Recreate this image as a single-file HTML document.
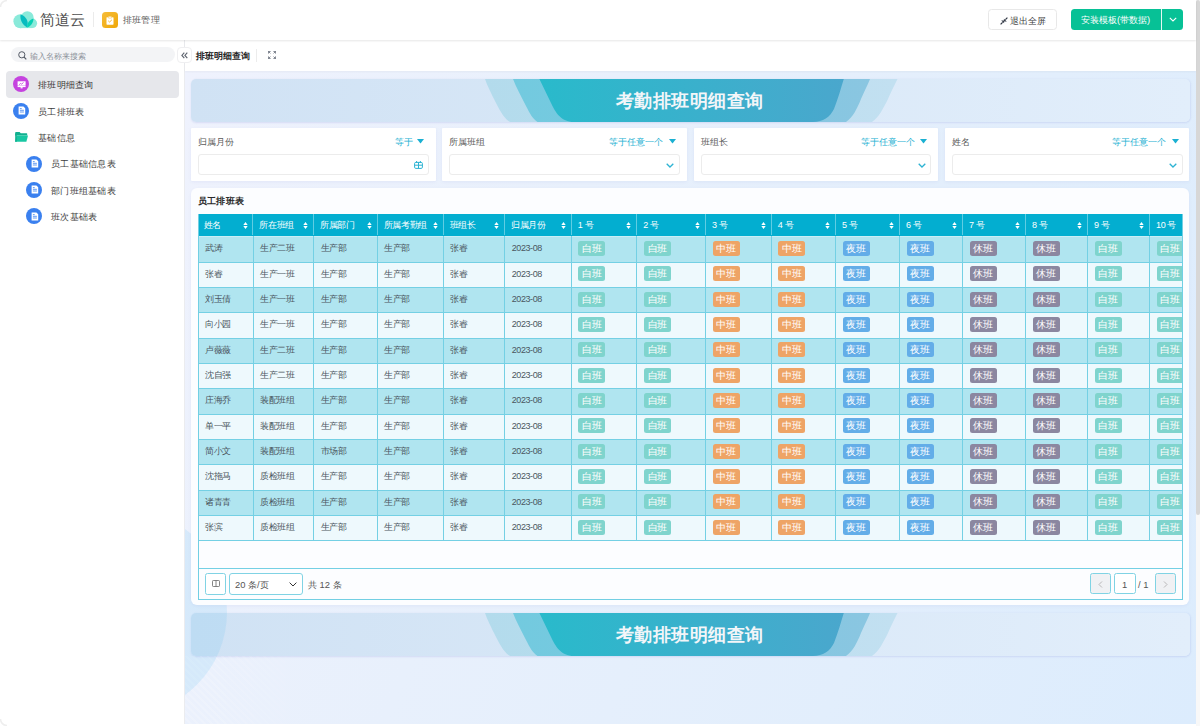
<!DOCTYPE html>
<html><head><meta charset="utf-8">
<style>
*{box-sizing:border-box;margin:0;padding:0}
html,body{width:1200px;height:726px;overflow:hidden;background:#fff;font-family:"Liberation Sans",sans-serif;color:#333}
.a{position:absolute}
#hdr{left:0;top:0;width:1196px;height:40px;background:#fff;box-shadow:0 1px 2px rgba(0,0,0,.10);z-index:5}
#side{left:0;top:40px;width:185px;height:686px;background:#fff;border-right:1px solid #ebecef}
#chead{left:185px;top:40px;width:1011px;height:31px;background:#fff;z-index:3;box-shadow:0 1px 2px rgba(0,0,0,.04)}
#dash{left:185px;top:71px;width:1011px;height:653px;background:linear-gradient(110deg,#eff2fd 0%,#e8f0fc 35%,#e2eefc 70%,#dcecfd 100%);overflow:hidden}
.scroll{left:1196px;top:0;width:4px;height:726px;background:#f8f8f8}
.thumb{left:1196px;top:0;width:4px;height:515px;background:#d7d7d7;border-radius:2px}
.txt{white-space:nowrap;line-height:1}
.menu .it{position:absolute;left:0;width:185px;height:26px}
.ico{position:absolute;width:16px;height:16px;border-radius:50%}
.card{position:absolute;background:#fff;border-radius:1px;box-shadow:0 1px 3px rgba(130,140,210,.10)}
.flabel{position:absolute;left:7px;top:9px;font-size:9.4px;color:#595959;white-space:nowrap;line-height:1}
.fop{position:absolute;top:9px;font-size:9.4px;color:#1ab0d2;white-space:nowrap;line-height:1}
.finp{position:absolute;left:7px;top:26.3px;width:230.5px;height:21px;border:1px solid #ececec;border-radius:3px;background:#fff}
.tbl{position:absolute;left:198px;top:213.8px;width:984.5px;height:386.2px;overflow:hidden;border:1px solid #72cfe3;border-top:none}
.thead{position:absolute;left:0;top:0;width:1100px;height:22.4px;background:#03aed0}
.hc{position:absolute;top:0;height:21.6px;border-left:1px solid #5fcde3}
.hc:first-child{border-left:none}
.hc span{position:absolute;left:6.1px;top:7.5px;font-size:9px;letter-spacing:-0.35px;color:#fff;white-space:nowrap;line-height:1}
.hc .si{position:absolute;right:4.6px;top:8px}
.tbody{position:absolute;left:0;top:0;width:1100px;height:380px}
.row{position:absolute;left:0;width:1100px;height:25.35px;border-top:1px solid #74d0e4}
.rd{background:#b0e5f0}
.r0{border-top-color:#c9eef6}
.rl{background:#eef9fd}
.c{position:absolute;top:0;height:24.35px;font-size:9px;letter-spacing:-0.4px;color:#4b5660;line-height:23px;padding-left:7px;white-space:nowrap}
.vl{position:absolute;top:22px;width:1px;height:305px;background:#74d0e4}
.bd{display:inline-block;font-style:normal;width:27px;height:15px;line-height:15px;border-radius:2.5px;color:#fff;font-size:9.6px;text-align:center;vertical-align:middle;margin-top:-1px}
.bw{background:#7fd4cd}
.bz{background:#eea466}
.by{background:#63ade8}
.bx{background:#8b87a0}
</style></head><body>
<svg class="a" style="left:0;top:0;z-index:9" width="8" height="8"><path d="M0.5 7 A6.5 6.5 0 0 1 7 0.5" stroke="#eeeeee" stroke-width="1.5" fill="none"/></svg><svg class="a" style="left:0;top:718px;z-index:9" width="8" height="8"><path d="M0.5 1 A6.5 6.5 0 0 0 7 7.5" stroke="#eeeeee" stroke-width="1.5" fill="none"/></svg>
<div class="a scroll"></div><div class="a thumb"></div>

<!-- header -->
<div id="hdr" class="a">
  <svg class="a" style="left:13px;top:10px" width="25" height="19" viewBox="0 0 25 19">
    <g fill="#8aeada"><circle cx="7.4" cy="11.3" r="7"/><circle cx="14.3" cy="7.5" r="6.3"/><circle cx="19.3" cy="13.3" r="4.8"/><rect x="7.4" y="10" width="12" height="8.1"/></g>
    <path d="M14.1 17.6 C9.2 14.2 6.6 9.6 7.6 4.4 C11.8 5.6 14.6 9.4 14.7 13 C14.7 14.8 14.5 16.3 14.1 17.6Z" fill="#06bcbf"/>
    <path d="M14.1 17.6 C14 13.6 16.4 9.4 20.6 8.6 C20.3 12.8 17.8 16.6 14.1 17.6Z" fill="#05d2b4"/>
  </svg>
  <div class="a txt" style="left:40px;top:11.5px;font-size:15.2px;color:#4f4f4f;letter-spacing:0.2px">简道云</div>
  <div class="a" style="left:93px;top:12px;width:1px;height:15px;background:#ebebeb"></div>
  <div class="a" style="left:102px;top:12px;width:16px;height:15.5px;border-radius:3.5px;background:linear-gradient(135deg,#f6bd3a,#efa707)"></div>
  <svg class="a" style="left:106px;top:15.5px" width="8" height="9" viewBox="0 0 8 9"><rect x="0.5" y="1.2" width="7" height="7.5" rx="0.6" fill="#fff"/><rect x="2.3" y="0.3" width="3.4" height="1.8" rx="0.4" fill="#fff" stroke="#f3b020" stroke-width="0.5"/><path d="M2.2 4.8 L3.6 6 L5.9 3.8" stroke="#f3b020" stroke-width="0.9" fill="none"/></svg>
  <div class="a txt" style="left:123px;top:16px;font-size:9.3px;color:#595959;letter-spacing:0.2px">排班管理</div>

  <div class="a" style="left:987.6px;top:9.3px;width:69.8px;height:21px;border:1px solid #e8e8e8;border-radius:3.5px;background:#fff"></div>
  <svg class="a" style="left:999.5px;top:16.5px" width="8" height="8" viewBox="0 0 8 8"><path d="M0.6 7.4 L2.6 5.4 M7.4 0.6 L5.4 2.6" stroke="#2c3340" stroke-width="1.2"/><path d="M1.2 3.4 H4.1 V6.3Z M3.9 1.7 V4.6 H6.8Z" fill="#2c3340"/></svg>
  <div class="a txt" style="left:1010px;top:15.5px;font-size:9.4px;color:#3b3b3b">退出全屏</div>

  <div class="a" style="left:1071px;top:9px;width:112px;height:21px;border-radius:3.5px;background:#07c196"></div>
  <div class="a" style="left:1161px;top:9px;width:1px;height:21px;background:#e6f8f3"></div>
  <div class="a txt" style="left:1081px;top:15px;font-size:9.4px;color:#fff">安装模板(带数据)</div>
  <svg class="a" style="left:1168.5px;top:17px" width="8" height="5" viewBox="0 0 8 5"><path d="M0.8 0.8 L4 4 L7.2 0.8" stroke="#fff" stroke-width="1.1" fill="none"/></svg>
</div>

<!-- sidebar -->
<div id="side" class="a">
  <div class="a" style="left:11px;top:7.2px;width:164px;height:15px;border-radius:7.5px;background:#f3f4f6"></div>
  <svg class="a" style="left:18px;top:11px" width="9" height="9" viewBox="0 0 9 9"><circle cx="3.8" cy="3.8" r="3.1" stroke="#555b66" stroke-width="1" fill="none"/><path d="M6 6 L8.3 8.3" stroke="#555b66" stroke-width="1.1"/></svg>
  <div class="a txt" style="left:30px;top:13px;font-size:7.8px;color:#8a9098">输入名称来搜索</div>

  <div class="a" style="left:5.5px;top:31.3px;width:173px;height:26.5px;border-radius:4px;background:#e6e7eb"></div>
  <div class="ico" style="left:13px;top:36px;background:#c543df"></div>
  <svg class="a" style="left:16.5px;top:40.5px" width="9" height="8" viewBox="0 0 9 8"><rect x="0.6" y="0.3" width="8" height="4.4" fill="#fff"/><rect x="0.6" y="5" width="8" height="1.1" fill="#fff"/><rect x="3.6" y="6.1" width="2" height="1.3" fill="#fff"/><path d="M2.2 3.6 L3.6 2.5 L4.6 3.1 L6.5 1.5" stroke="#c543df" stroke-width="0.9" fill="none"/></svg>
  <div class="a txt" style="left:38px;top:40.3px;font-size:9.4px;color:#333;letter-spacing:0.27px">排班明细查询</div>

  <div class="ico" style="left:13px;top:62.8px;background:#3a80ef"></div>
  <svg class="a" style="left:17.5px;top:66.2px" width="8" height="9" viewBox="0 0 8 9"><path d="M0.6 0.4 H5.4 L7.2 2.2 V8.4 H0.6Z" fill="#fff"/><path d="M1.9 2.6 H3.7 M1.9 4.3 H5.9 M1.9 6 H5.9" stroke="#3a80ef" stroke-width="0.8"/></svg>
  <div class="a txt" style="left:38px;top:66.5px;font-size:9.4px;color:#3c3c3c;letter-spacing:0.25px">员工排班表</div>

  <svg class="a" style="left:14.5px;top:92px" width="13" height="10" viewBox="0 0 13 10"><path d="M0.2 0.8 Q0.2 0 1 0 H4.6 L5.8 1.2 H11.6 Q12.2 1.2 12.2 1.8 V3.5 H0.2Z" fill="#11b08f"/><path d="M0 9.8 L1.6 3.4 H13 L11.4 9.8Z" fill="#18c7a3"/><path d="M0.2 1 V9.8 H1.8 V3" fill="#11b08f"/></svg>
  <div class="a txt" style="left:38px;top:92.5px;font-size:9.4px;color:#3c3c3c;letter-spacing:0.25px">基础信息</div>

  <div class="ico" style="left:26px;top:115.5px;background:#3a80ef"></div>
  <svg class="a" style="left:30.5px;top:119px" width="8" height="9" viewBox="0 0 8 9"><path d="M0.6 0.4 H5.4 L7.2 2.2 V8.4 H0.6Z" fill="#fff"/><path d="M1.9 2.6 H3.7 M1.9 4.3 H5.9 M1.9 6 H5.9" stroke="#3a80ef" stroke-width="0.8"/></svg>
  <div class="a txt" style="left:51px;top:119px;font-size:9.4px;color:#3c3c3c;letter-spacing:0.25px">员工基础信息表</div>

  <div class="ico" style="left:26px;top:141.5px;background:#3a80ef"></div>
  <svg class="a" style="left:30.5px;top:145px" width="8" height="9" viewBox="0 0 8 9"><path d="M0.6 0.4 H5.4 L7.2 2.2 V8.4 H0.6Z" fill="#fff"/><path d="M1.9 2.6 H3.7 M1.9 4.3 H5.9 M1.9 6 H5.9" stroke="#3a80ef" stroke-width="0.8"/></svg>
  <div class="a txt" style="left:51px;top:145.5px;font-size:9.4px;color:#3c3c3c;letter-spacing:0.25px">部门班组基础表</div>

  <div class="ico" style="left:26px;top:168.3px;background:#3a80ef"></div>
  <svg class="a" style="left:30.5px;top:171.7px" width="8" height="9" viewBox="0 0 8 9"><path d="M0.6 0.4 H5.4 L7.2 2.2 V8.4 H0.6Z" fill="#fff"/><path d="M1.9 2.6 H3.7 M1.9 4.3 H5.9 M1.9 6 H5.9" stroke="#3a80ef" stroke-width="0.8"/></svg>
  <div class="a txt" style="left:51px;top:172px;font-size:9.4px;color:#3c3c3c;letter-spacing:0.25px">班次基础表</div>
</div>

<!-- content header -->
<div id="chead" class="a">
  <div class="a txt" style="left:11px;top:11.5px;font-size:9.1px;font-weight:bold;color:#222">排班明细查询</div>
  <div class="a" style="left:71px;top:9px;width:1px;height:13px;background:#ececec"></div>
  <svg class="a" style="left:83px;top:11px" width="8" height="8" viewBox="0 0 8 8" fill="none" stroke="#5b6270" stroke-width="0.8"><path d="M0.4 2.6 V0.4 H2.6 M5.4 0.4 H7.6 V2.6 M7.6 5.4 V7.6 H5.4 M2.6 7.6 H0.4 V5.4"/><path d="M0.6 0.6 L2.4 2.4 M7.4 0.6 L5.6 2.4 M7.4 7.4 L5.6 5.6 M0.6 7.4 L2.4 5.6"/></svg>
</div>
<div class="a" style="left:176.5px;top:47.3px;width:15px;height:15.5px;border:1px solid #efeff1;border-radius:4px;background:#fff;z-index:6"></div>
<svg class="a" style="left:180.8px;top:51.8px;z-index:7" width="7" height="7" viewBox="0 0 7 7" fill="none" stroke="#5f6570" stroke-width="1.15"><path d="M3.3 0.6 L0.9 3.4 L3.3 6.2 M6.3 0.6 L3.9 3.4 L6.3 6.2"/></svg>

<!-- dashboard -->
<div id="dash" class="a">
  
</div>

<!-- banner 1 -->
<div class="a" style="left:191px;top:78.5px;width:999px;height:43px;border-radius:5px;box-shadow:0 1px 2px rgba(120,130,210,.16),1px 0 2px rgba(120,130,210,.10)"></div>
<svg class="a" style="left:191px;top:78.5px" width="999" height="43" viewBox="0 0 999 43">
  <defs>
    <linearGradient id="bg1" x1="0" x2="1"><stop offset="0" stop-color="#d0e2f4"/><stop offset="1" stop-color="#e2eefb"/></linearGradient>
    <linearGradient id="mg1" x1="0" x2="1"><stop offset="0" stop-color="#29bacb"/><stop offset="1" stop-color="#4aa7cd"/></linearGradient>
    <linearGradient id="la1" x1="0" x2="1"><stop offset="0" stop-color="#b3dbec"/><stop offset="1" stop-color="#c2e0f1"/></linearGradient>
    <linearGradient id="lb1" x1="0" x2="1"><stop offset="0" stop-color="#72cadf"/><stop offset="1" stop-color="#8ac6e1"/></linearGradient>
    <clipPath id="cp1"><rect width="999" height="43" rx="5"/></clipPath>
  </defs>
  <g clip-path="url(#cp1)">
  <rect width="999" height="43" fill="url(#bg1)"/>
  <path d="M294 0 C296 6 300 14 305 24 C310 34 314 40 319 43 H681 C688 38 692 30 697 20 C701 11 704 5 706.5 0Z" fill="url(#la1)"/>
  <path d="M322 0 C325 8 330 17 335 27 C339 35 342 40 346.5 43 H655 C662 38 666 30 670 20 C674 11 677 5 679 0Z" fill="url(#lb1)"/>
  <path d="M348.4 0 L360 24 C364.5 33.5 370 43 383 43 H622 C632 43 639 38 643 30 C647 20 650 9 652.8 0Z" fill="url(#mg1)"/>
  </g>
</svg>
<div class="a txt" style="left:616px;top:91.7px;font-size:18.4px;font-weight:bold;color:#f3f6f9;letter-spacing:0.45px">考勤排班明细查询</div>

<!-- filter cards -->
<div class="card" style="left:191px;top:128px;width:244.5px;height:52.5px">
  <div class="flabel">归属月份</div>
  <div class="fop" style="left:204px">等于</div>
  <svg class="a" style="left:226px;top:11px" width="7" height="5" viewBox="0 0 7 5"><path d="M0 0 H7 L3.5 4.5Z" fill="#1ab0d2"/></svg>
  <div class="finp"></div>
  <svg class="a" style="left:223px;top:33px" width="9" height="8" viewBox="0 0 9 8" fill="none" stroke="#2db3d3" stroke-width="1"><rect x="0.6" y="1.4" width="7.8" height="6" rx="1.2"/><path d="M0.6 4.2 H8.4 M4.5 1.4 V7.4 M2.6 0 V2 M6.4 0 V2"/></svg>
</div>
<div class="card" style="left:442px;top:128px;width:245px;height:52.5px">
  <div class="flabel">所属班组</div>
  <div class="fop" style="left:167px">等于任意一个</div>
  <svg class="a" style="left:226.5px;top:11px" width="7" height="5" viewBox="0 0 7 5"><path d="M0 0 H7 L3.5 4.5Z" fill="#1ab0d2"/></svg>
  <div class="finp"></div>
  <svg class="a" style="left:224px;top:35px" width="8" height="5" viewBox="0 0 8 5"><path d="M0.7 0.7 L4 4 L7.3 0.7" stroke="#2db3d3" stroke-width="1.3" fill="none"/></svg>
</div>
<div class="card" style="left:693.5px;top:128px;width:244.5px;height:52.5px">
  <div class="flabel">班组长</div>
  <div class="fop" style="left:167px">等于任意一个</div>
  <svg class="a" style="left:226.5px;top:11px" width="7" height="5" viewBox="0 0 7 5"><path d="M0 0 H7 L3.5 4.5Z" fill="#1ab0d2"/></svg>
  <div class="finp"></div>
  <svg class="a" style="left:224px;top:35px" width="8" height="5" viewBox="0 0 8 5"><path d="M0.7 0.7 L4 4 L7.3 0.7" stroke="#2db3d3" stroke-width="1.3" fill="none"/></svg>
</div>
<div class="card" style="left:945px;top:128px;width:244px;height:52.5px">
  <div class="flabel">姓名</div>
  <div class="fop" style="left:167px">等于任意一个</div>
  <svg class="a" style="left:226.5px;top:11px" width="7" height="5" viewBox="0 0 7 5"><path d="M0 0 H7 L3.5 4.5Z" fill="#1ab0d2"/></svg>
  <div class="finp"></div>
  <svg class="a" style="left:224px;top:35px" width="8" height="5" viewBox="0 0 8 5"><path d="M0.7 0.7 L4 4 L7.3 0.7" stroke="#2db3d3" stroke-width="1.3" fill="none"/></svg>
</div>

<!-- banner 2 -->
<div class="a" style="left:191px;top:613px;width:999px;height:43px;border-radius:5px;box-shadow:0 1px 2px rgba(120,130,210,.16),1px 0 2px rgba(120,130,210,.10)"></div>
<svg class="a" style="left:191px;top:613px" width="999" height="43" viewBox="0 0 999 43">
  <defs>
    <clipPath id="cp2"><rect width="999" height="43" rx="5"/></clipPath>
  </defs>
  <g clip-path="url(#cp2)">
  <rect width="999" height="43" fill="url(#bg1)"/>
  <path d="M294 0 C296 6 300 14 305 24 C310 34 314 40 319 43 H681 C688 38 692 30 697 20 C701 11 704 5 706.5 0Z" fill="url(#la1)"/>
  <path d="M322 0 C325 8 330 17 335 27 C339 35 342 40 346.5 43 H655 C662 38 666 30 670 20 C674 11 677 5 679 0Z" fill="url(#lb1)"/>
  <path d="M348.4 0 L360 24 C364.5 33.5 370 43 383 43 H622 C632 43 639 38 643 30 C647 20 650 9 652.8 0Z" fill="url(#mg1)"/>
  </g>
</svg>
<div class="a" style="left:185px;top:656px;width:130px;height:68px;background:repeating-linear-gradient(45deg,rgba(255,255,255,0) 0 3px,rgba(255,255,255,.22) 3px 5px);-webkit-mask-image:linear-gradient(90deg,rgba(0,0,0,.9),rgba(0,0,0,0))"></div>
<div class="a" style="left:21px;top:509px;width:206px;height:206px;border-radius:50%;background:rgba(100,190,240,.16);clip-path:inset(0 0 0 164px)"></div>
<div class="a txt" style="left:616px;top:625.7px;font-size:18.4px;font-weight:bold;color:#f3f6f9;letter-spacing:0.45px">考勤排班明细查询</div>
<!-- table card -->
<div class="card" style="left:191px;top:187.7px;width:998.2px;height:417.8px;background:#fcfdff;border-radius:6px"></div>
<div class="a txt" style="left:198px;top:195.6px;font-size:9.4px;font-weight:bold;color:#2a2a2a;letter-spacing:0.2px">员工排班表</div>

<div class="tbl">
  <div class="thead"><div class="hc" style="left:-1.6px;width:55.0px"><span>姓名</span><svg class="si" width="5" height="7" viewBox="0 0 5 7"><path d="M2.5 0 L4.7 2.9 H0.3Z M2.5 7 L4.7 4.1 H0.3Z" fill="#fff"/></svg></div><div class="hc" style="left:53.4px;width:60.7px"><span>所在班组</span><svg class="si" width="5" height="7" viewBox="0 0 5 7"><path d="M2.5 0 L4.7 2.9 H0.3Z M2.5 7 L4.7 4.1 H0.3Z" fill="#fff"/></svg></div><div class="hc" style="left:114.1px;width:63.6px"><span>所属部门</span><svg class="si" width="5" height="7" viewBox="0 0 5 7"><path d="M2.5 0 L4.7 2.9 H0.3Z M2.5 7 L4.7 4.1 H0.3Z" fill="#fff"/></svg></div><div class="hc" style="left:177.7px;width:66.0px"><span>所属考勤组</span><svg class="si" width="5" height="7" viewBox="0 0 5 7"><path d="M2.5 0 L4.7 2.9 H0.3Z M2.5 7 L4.7 4.1 H0.3Z" fill="#fff"/></svg></div><div class="hc" style="left:243.7px;width:61.4px"><span>班组长</span><svg class="si" width="5" height="7" viewBox="0 0 5 7"><path d="M2.5 0 L4.7 2.9 H0.3Z M2.5 7 L4.7 4.1 H0.3Z" fill="#fff"/></svg></div><div class="hc" style="left:305.1px;width:66.6px"><span>归属月份</span><svg class="si" width="5" height="7" viewBox="0 0 5 7"><path d="M2.5 0 L4.7 2.9 H0.3Z M2.5 7 L4.7 4.1 H0.3Z" fill="#fff"/></svg></div><div class="hc" style="left:371.7px;width:65.4px"><span>1 号</span><svg class="si" width="5" height="7" viewBox="0 0 5 7"><path d="M2.5 0 L4.7 2.9 H0.3Z M2.5 7 L4.7 4.1 H0.3Z" fill="#fff"/></svg></div><div class="hc" style="left:437.1px;width:68.8px"><span>2 号</span><svg class="si" width="5" height="7" viewBox="0 0 5 7"><path d="M2.5 0 L4.7 2.9 H0.3Z M2.5 7 L4.7 4.1 H0.3Z" fill="#fff"/></svg></div><div class="hc" style="left:505.9px;width:65.8px"><span>3 号</span><svg class="si" width="5" height="7" viewBox="0 0 5 7"><path d="M2.5 0 L4.7 2.9 H0.3Z M2.5 7 L4.7 4.1 H0.3Z" fill="#fff"/></svg></div><div class="hc" style="left:571.7px;width:64.2px"><span>4 号</span><svg class="si" width="5" height="7" viewBox="0 0 5 7"><path d="M2.5 0 L4.7 2.9 H0.3Z M2.5 7 L4.7 4.1 H0.3Z" fill="#fff"/></svg></div><div class="hc" style="left:635.9px;width:64.0px"><span>5 号</span><svg class="si" width="5" height="7" viewBox="0 0 5 7"><path d="M2.5 0 L4.7 2.9 H0.3Z M2.5 7 L4.7 4.1 H0.3Z" fill="#fff"/></svg></div><div class="hc" style="left:699.9px;width:63.0px"><span>6 号</span><svg class="si" width="5" height="7" viewBox="0 0 5 7"><path d="M2.5 0 L4.7 2.9 H0.3Z M2.5 7 L4.7 4.1 H0.3Z" fill="#fff"/></svg></div><div class="hc" style="left:762.9px;width:63.0px"><span>7 号</span><svg class="si" width="5" height="7" viewBox="0 0 5 7"><path d="M2.5 0 L4.7 2.9 H0.3Z M2.5 7 L4.7 4.1 H0.3Z" fill="#fff"/></svg></div><div class="hc" style="left:825.9px;width:62.0px"><span>8 号</span><svg class="si" width="5" height="7" viewBox="0 0 5 7"><path d="M2.5 0 L4.7 2.9 H0.3Z M2.5 7 L4.7 4.1 H0.3Z" fill="#fff"/></svg></div><div class="hc" style="left:887.9px;width:62.0px"><span>9 号</span><svg class="si" width="5" height="7" viewBox="0 0 5 7"><path d="M2.5 0 L4.7 2.9 H0.3Z M2.5 7 L4.7 4.1 H0.3Z" fill="#fff"/></svg></div><div class="hc" style="left:949.9px;width:62.0px"><span>10 号</span><svg class="si" width="5" height="7" viewBox="0 0 5 7"><path d="M2.5 0 L4.7 2.9 H0.3Z M2.5 7 L4.7 4.1 H0.3Z" fill="#fff"/></svg></div></div>
  <div class="tbody"><div class="row rd r0" style="top:22.40px"><div class="c" style="left:-1.0px;width:55.0px">武涛</div><div class="c" style="left:54.0px;width:60.7px">生产二班</div><div class="c" style="left:114.7px;width:63.6px">生产部</div><div class="c" style="left:178.3px;width:66.0px">生产部</div><div class="c" style="left:244.3px;width:61.4px">张睿</div><div class="c" style="left:305.7px;width:66.6px">2023-08</div><div class="c" style="left:372.3px;width:65.4px"><i class="bd bw">白班</i></div><div class="c" style="left:437.7px;width:68.8px"><i class="bd bw">白班</i></div><div class="c" style="left:506.5px;width:65.8px"><i class="bd bz">中班</i></div><div class="c" style="left:572.3px;width:64.2px"><i class="bd bz">中班</i></div><div class="c" style="left:636.5px;width:64.0px"><i class="bd by">夜班</i></div><div class="c" style="left:700.5px;width:63.0px"><i class="bd by">夜班</i></div><div class="c" style="left:763.5px;width:63.0px"><i class="bd bx">休班</i></div><div class="c" style="left:826.5px;width:62.0px"><i class="bd bx">休班</i></div><div class="c" style="left:888.5px;width:62.0px"><i class="bd bw">白班</i></div><div class="c" style="left:950.5px;width:62.0px"><i class="bd bw">白班</i></div></div><div class="row rl" style="top:47.75px"><div class="c" style="left:-1.0px;width:55.0px">张睿</div><div class="c" style="left:54.0px;width:60.7px">生产一班</div><div class="c" style="left:114.7px;width:63.6px">生产部</div><div class="c" style="left:178.3px;width:66.0px">生产部</div><div class="c" style="left:244.3px;width:61.4px">张睿</div><div class="c" style="left:305.7px;width:66.6px">2023-08</div><div class="c" style="left:372.3px;width:65.4px"><i class="bd bw">白班</i></div><div class="c" style="left:437.7px;width:68.8px"><i class="bd bw">白班</i></div><div class="c" style="left:506.5px;width:65.8px"><i class="bd bz">中班</i></div><div class="c" style="left:572.3px;width:64.2px"><i class="bd bz">中班</i></div><div class="c" style="left:636.5px;width:64.0px"><i class="bd by">夜班</i></div><div class="c" style="left:700.5px;width:63.0px"><i class="bd by">夜班</i></div><div class="c" style="left:763.5px;width:63.0px"><i class="bd bx">休班</i></div><div class="c" style="left:826.5px;width:62.0px"><i class="bd bx">休班</i></div><div class="c" style="left:888.5px;width:62.0px"><i class="bd bw">白班</i></div><div class="c" style="left:950.5px;width:62.0px"><i class="bd bw">白班</i></div></div><div class="row rd" style="top:73.10px"><div class="c" style="left:-1.0px;width:55.0px">刘玉倩</div><div class="c" style="left:54.0px;width:60.7px">生产一班</div><div class="c" style="left:114.7px;width:63.6px">生产部</div><div class="c" style="left:178.3px;width:66.0px">生产部</div><div class="c" style="left:244.3px;width:61.4px">张睿</div><div class="c" style="left:305.7px;width:66.6px">2023-08</div><div class="c" style="left:372.3px;width:65.4px"><i class="bd bw">白班</i></div><div class="c" style="left:437.7px;width:68.8px"><i class="bd bw">白班</i></div><div class="c" style="left:506.5px;width:65.8px"><i class="bd bz">中班</i></div><div class="c" style="left:572.3px;width:64.2px"><i class="bd bz">中班</i></div><div class="c" style="left:636.5px;width:64.0px"><i class="bd by">夜班</i></div><div class="c" style="left:700.5px;width:63.0px"><i class="bd by">夜班</i></div><div class="c" style="left:763.5px;width:63.0px"><i class="bd bx">休班</i></div><div class="c" style="left:826.5px;width:62.0px"><i class="bd bx">休班</i></div><div class="c" style="left:888.5px;width:62.0px"><i class="bd bw">白班</i></div><div class="c" style="left:950.5px;width:62.0px"><i class="bd bw">白班</i></div></div><div class="row rl" style="top:98.45px"><div class="c" style="left:-1.0px;width:55.0px">向小园</div><div class="c" style="left:54.0px;width:60.7px">生产一班</div><div class="c" style="left:114.7px;width:63.6px">生产部</div><div class="c" style="left:178.3px;width:66.0px">生产部</div><div class="c" style="left:244.3px;width:61.4px">张睿</div><div class="c" style="left:305.7px;width:66.6px">2023-08</div><div class="c" style="left:372.3px;width:65.4px"><i class="bd bw">白班</i></div><div class="c" style="left:437.7px;width:68.8px"><i class="bd bw">白班</i></div><div class="c" style="left:506.5px;width:65.8px"><i class="bd bz">中班</i></div><div class="c" style="left:572.3px;width:64.2px"><i class="bd bz">中班</i></div><div class="c" style="left:636.5px;width:64.0px"><i class="bd by">夜班</i></div><div class="c" style="left:700.5px;width:63.0px"><i class="bd by">夜班</i></div><div class="c" style="left:763.5px;width:63.0px"><i class="bd bx">休班</i></div><div class="c" style="left:826.5px;width:62.0px"><i class="bd bx">休班</i></div><div class="c" style="left:888.5px;width:62.0px"><i class="bd bw">白班</i></div><div class="c" style="left:950.5px;width:62.0px"><i class="bd bw">白班</i></div></div><div class="row rd" style="top:123.80px"><div class="c" style="left:-1.0px;width:55.0px">卢薇薇</div><div class="c" style="left:54.0px;width:60.7px">生产二班</div><div class="c" style="left:114.7px;width:63.6px">生产部</div><div class="c" style="left:178.3px;width:66.0px">生产部</div><div class="c" style="left:244.3px;width:61.4px">张睿</div><div class="c" style="left:305.7px;width:66.6px">2023-08</div><div class="c" style="left:372.3px;width:65.4px"><i class="bd bw">白班</i></div><div class="c" style="left:437.7px;width:68.8px"><i class="bd bw">白班</i></div><div class="c" style="left:506.5px;width:65.8px"><i class="bd bz">中班</i></div><div class="c" style="left:572.3px;width:64.2px"><i class="bd bz">中班</i></div><div class="c" style="left:636.5px;width:64.0px"><i class="bd by">夜班</i></div><div class="c" style="left:700.5px;width:63.0px"><i class="bd by">夜班</i></div><div class="c" style="left:763.5px;width:63.0px"><i class="bd bx">休班</i></div><div class="c" style="left:826.5px;width:62.0px"><i class="bd bx">休班</i></div><div class="c" style="left:888.5px;width:62.0px"><i class="bd bw">白班</i></div><div class="c" style="left:950.5px;width:62.0px"><i class="bd bw">白班</i></div></div><div class="row rl" style="top:149.15px"><div class="c" style="left:-1.0px;width:55.0px">沈自强</div><div class="c" style="left:54.0px;width:60.7px">生产二班</div><div class="c" style="left:114.7px;width:63.6px">生产部</div><div class="c" style="left:178.3px;width:66.0px">生产部</div><div class="c" style="left:244.3px;width:61.4px">张睿</div><div class="c" style="left:305.7px;width:66.6px">2023-08</div><div class="c" style="left:372.3px;width:65.4px"><i class="bd bw">白班</i></div><div class="c" style="left:437.7px;width:68.8px"><i class="bd bw">白班</i></div><div class="c" style="left:506.5px;width:65.8px"><i class="bd bz">中班</i></div><div class="c" style="left:572.3px;width:64.2px"><i class="bd bz">中班</i></div><div class="c" style="left:636.5px;width:64.0px"><i class="bd by">夜班</i></div><div class="c" style="left:700.5px;width:63.0px"><i class="bd by">夜班</i></div><div class="c" style="left:763.5px;width:63.0px"><i class="bd bx">休班</i></div><div class="c" style="left:826.5px;width:62.0px"><i class="bd bx">休班</i></div><div class="c" style="left:888.5px;width:62.0px"><i class="bd bw">白班</i></div><div class="c" style="left:950.5px;width:62.0px"><i class="bd bw">白班</i></div></div><div class="row rd" style="top:174.50px"><div class="c" style="left:-1.0px;width:55.0px">庄海乔</div><div class="c" style="left:54.0px;width:60.7px">装配班组</div><div class="c" style="left:114.7px;width:63.6px">生产部</div><div class="c" style="left:178.3px;width:66.0px">生产部</div><div class="c" style="left:244.3px;width:61.4px">张睿</div><div class="c" style="left:305.7px;width:66.6px">2023-08</div><div class="c" style="left:372.3px;width:65.4px"><i class="bd bw">白班</i></div><div class="c" style="left:437.7px;width:68.8px"><i class="bd bw">白班</i></div><div class="c" style="left:506.5px;width:65.8px"><i class="bd bz">中班</i></div><div class="c" style="left:572.3px;width:64.2px"><i class="bd bz">中班</i></div><div class="c" style="left:636.5px;width:64.0px"><i class="bd by">夜班</i></div><div class="c" style="left:700.5px;width:63.0px"><i class="bd by">夜班</i></div><div class="c" style="left:763.5px;width:63.0px"><i class="bd bx">休班</i></div><div class="c" style="left:826.5px;width:62.0px"><i class="bd bx">休班</i></div><div class="c" style="left:888.5px;width:62.0px"><i class="bd bw">白班</i></div><div class="c" style="left:950.5px;width:62.0px"><i class="bd bw">白班</i></div></div><div class="row rl" style="top:199.85px"><div class="c" style="left:-1.0px;width:55.0px">单一平</div><div class="c" style="left:54.0px;width:60.7px">装配班组</div><div class="c" style="left:114.7px;width:63.6px">生产部</div><div class="c" style="left:178.3px;width:66.0px">生产部</div><div class="c" style="left:244.3px;width:61.4px">张睿</div><div class="c" style="left:305.7px;width:66.6px">2023-08</div><div class="c" style="left:372.3px;width:65.4px"><i class="bd bw">白班</i></div><div class="c" style="left:437.7px;width:68.8px"><i class="bd bw">白班</i></div><div class="c" style="left:506.5px;width:65.8px"><i class="bd bz">中班</i></div><div class="c" style="left:572.3px;width:64.2px"><i class="bd bz">中班</i></div><div class="c" style="left:636.5px;width:64.0px"><i class="bd by">夜班</i></div><div class="c" style="left:700.5px;width:63.0px"><i class="bd by">夜班</i></div><div class="c" style="left:763.5px;width:63.0px"><i class="bd bx">休班</i></div><div class="c" style="left:826.5px;width:62.0px"><i class="bd bx">休班</i></div><div class="c" style="left:888.5px;width:62.0px"><i class="bd bw">白班</i></div><div class="c" style="left:950.5px;width:62.0px"><i class="bd bw">白班</i></div></div><div class="row rd" style="top:225.20px"><div class="c" style="left:-1.0px;width:55.0px">简小文</div><div class="c" style="left:54.0px;width:60.7px">装配班组</div><div class="c" style="left:114.7px;width:63.6px">市场部</div><div class="c" style="left:178.3px;width:66.0px">生产部</div><div class="c" style="left:244.3px;width:61.4px">张睿</div><div class="c" style="left:305.7px;width:66.6px">2023-08</div><div class="c" style="left:372.3px;width:65.4px"><i class="bd bw">白班</i></div><div class="c" style="left:437.7px;width:68.8px"><i class="bd bw">白班</i></div><div class="c" style="left:506.5px;width:65.8px"><i class="bd bz">中班</i></div><div class="c" style="left:572.3px;width:64.2px"><i class="bd bz">中班</i></div><div class="c" style="left:636.5px;width:64.0px"><i class="bd by">夜班</i></div><div class="c" style="left:700.5px;width:63.0px"><i class="bd by">夜班</i></div><div class="c" style="left:763.5px;width:63.0px"><i class="bd bx">休班</i></div><div class="c" style="left:826.5px;width:62.0px"><i class="bd bx">休班</i></div><div class="c" style="left:888.5px;width:62.0px"><i class="bd bw">白班</i></div><div class="c" style="left:950.5px;width:62.0px"><i class="bd bw">白班</i></div></div><div class="row rl" style="top:250.55px"><div class="c" style="left:-1.0px;width:55.0px">沈拖马</div><div class="c" style="left:54.0px;width:60.7px">质检班组</div><div class="c" style="left:114.7px;width:63.6px">生产部</div><div class="c" style="left:178.3px;width:66.0px">生产部</div><div class="c" style="left:244.3px;width:61.4px">张睿</div><div class="c" style="left:305.7px;width:66.6px">2023-08</div><div class="c" style="left:372.3px;width:65.4px"><i class="bd bw">白班</i></div><div class="c" style="left:437.7px;width:68.8px"><i class="bd bw">白班</i></div><div class="c" style="left:506.5px;width:65.8px"><i class="bd bz">中班</i></div><div class="c" style="left:572.3px;width:64.2px"><i class="bd bz">中班</i></div><div class="c" style="left:636.5px;width:64.0px"><i class="bd by">夜班</i></div><div class="c" style="left:700.5px;width:63.0px"><i class="bd by">夜班</i></div><div class="c" style="left:763.5px;width:63.0px"><i class="bd bx">休班</i></div><div class="c" style="left:826.5px;width:62.0px"><i class="bd bx">休班</i></div><div class="c" style="left:888.5px;width:62.0px"><i class="bd bw">白班</i></div><div class="c" style="left:950.5px;width:62.0px"><i class="bd bw">白班</i></div></div><div class="row rd" style="top:275.90px"><div class="c" style="left:-1.0px;width:55.0px">诸青青</div><div class="c" style="left:54.0px;width:60.7px">质检班组</div><div class="c" style="left:114.7px;width:63.6px">生产部</div><div class="c" style="left:178.3px;width:66.0px">生产部</div><div class="c" style="left:244.3px;width:61.4px">张睿</div><div class="c" style="left:305.7px;width:66.6px">2023-08</div><div class="c" style="left:372.3px;width:65.4px"><i class="bd bw">白班</i></div><div class="c" style="left:437.7px;width:68.8px"><i class="bd bw">白班</i></div><div class="c" style="left:506.5px;width:65.8px"><i class="bd bz">中班</i></div><div class="c" style="left:572.3px;width:64.2px"><i class="bd bz">中班</i></div><div class="c" style="left:636.5px;width:64.0px"><i class="bd by">夜班</i></div><div class="c" style="left:700.5px;width:63.0px"><i class="bd by">夜班</i></div><div class="c" style="left:763.5px;width:63.0px"><i class="bd bx">休班</i></div><div class="c" style="left:826.5px;width:62.0px"><i class="bd bx">休班</i></div><div class="c" style="left:888.5px;width:62.0px"><i class="bd bw">白班</i></div><div class="c" style="left:950.5px;width:62.0px"><i class="bd bw">白班</i></div></div><div class="row rl" style="top:301.25px"><div class="c" style="left:-1.0px;width:55.0px">张滨</div><div class="c" style="left:54.0px;width:60.7px">质检班组</div><div class="c" style="left:114.7px;width:63.6px">生产部</div><div class="c" style="left:178.3px;width:66.0px">生产部</div><div class="c" style="left:244.3px;width:61.4px">张睿</div><div class="c" style="left:305.7px;width:66.6px">2023-08</div><div class="c" style="left:372.3px;width:65.4px"><i class="bd bw">白班</i></div><div class="c" style="left:437.7px;width:68.8px"><i class="bd bw">白班</i></div><div class="c" style="left:506.5px;width:65.8px"><i class="bd bz">中班</i></div><div class="c" style="left:572.3px;width:64.2px"><i class="bd bz">中班</i></div><div class="c" style="left:636.5px;width:64.0px"><i class="bd by">夜班</i></div><div class="c" style="left:700.5px;width:63.0px"><i class="bd by">夜班</i></div><div class="c" style="left:763.5px;width:63.0px"><i class="bd bx">休班</i></div><div class="c" style="left:826.5px;width:62.0px"><i class="bd bx">休班</i></div><div class="c" style="left:888.5px;width:62.0px"><i class="bd bw">白班</i></div><div class="c" style="left:950.5px;width:62.0px"><i class="bd bw">白班</i></div></div><div style="position:absolute;left:0;top:326.60px;width:1100px;height:1px;background:#74d0e4"></div><div class="vl" style="left:53.5px"></div><div class="vl" style="left:114.2px"></div><div class="vl" style="left:177.8px"></div><div class="vl" style="left:243.8px"></div><div class="vl" style="left:305.2px"></div><div class="vl" style="left:371.8px"></div><div class="vl" style="left:437.2px"></div><div class="vl" style="left:506.0px"></div><div class="vl" style="left:571.8px"></div><div class="vl" style="left:636.0px"></div><div class="vl" style="left:700.0px"></div><div class="vl" style="left:763.0px"></div><div class="vl" style="left:826.0px"></div><div class="vl" style="left:888.0px"></div><div class="vl" style="left:950.0px"></div></div>
</div>
<!-- pagination -->
<div class="a" style="left:198px;top:568px;width:984.5px;height:1px;background:#74d0e4"></div>
<div class="a" style="left:205px;top:573px;width:21px;height:21.7px;border:1px solid #80d3e4;border-radius:2.5px;background:#fff"></div>
<svg class="a" style="left:211.5px;top:580px" width="8" height="7" viewBox="0 0 8 7" fill="none" stroke="#666" stroke-width="0.8"><rect x="0.5" y="0.5" width="7" height="6" rx="0.8"/><path d="M4 0.5 V6.5"/></svg>
<div class="a" style="left:229.3px;top:573px;width:74px;height:21.7px;border:1px solid #80d3e4;border-radius:3px;background:#fff"></div>
<div class="a txt" style="left:235px;top:579.5px;font-size:9.4px;color:#555">20 条/页</div>
<svg class="a" style="left:289px;top:582px" width="8" height="5" viewBox="0 0 8 5"><path d="M0.6 0.6 L4 4 L7.4 0.6" stroke="#333" stroke-width="1" fill="none"/></svg>
<div class="a txt" style="left:308px;top:579.5px;font-size:9.4px;color:#555">共 12 条</div>

<div class="a" style="left:1089.5px;top:573.3px;width:21px;height:21.2px;border:1px solid #80d3e4;border-radius:2.5px;background:#f0f1f4"></div>
<svg class="a" style="left:1097.5px;top:580.5px" width="5" height="7" viewBox="0 0 5 7"><path d="M4 0.5 L1 3.5 L4 6.5" stroke="#aaa" stroke-width="0.8" fill="none"/></svg>
<div class="a" style="left:1114px;top:573.3px;width:21.5px;height:21.2px;border:1px solid #80d3e4;border-radius:2.5px;background:#fff"></div>
<div class="a txt" style="left:1122px;top:579.5px;font-size:9.4px;color:#555">1</div>
<div class="a txt" style="left:1138px;top:579.5px;font-size:9.4px;color:#555">/ 1</div>
<div class="a" style="left:1154.5px;top:573.3px;width:21px;height:21.2px;border:1px solid #80d3e4;border-radius:2.5px;background:#f0f1f4"></div>
<svg class="a" style="left:1162.5px;top:580.5px" width="5" height="7" viewBox="0 0 5 7"><path d="M1 0.5 L4 3.5 L1 6.5" stroke="#aaa" stroke-width="0.8" fill="none"/></svg>

<div class="a" style="left:0;top:723.7px;width:1196px;height:3px;background:#fff"></div>
</body></html>
